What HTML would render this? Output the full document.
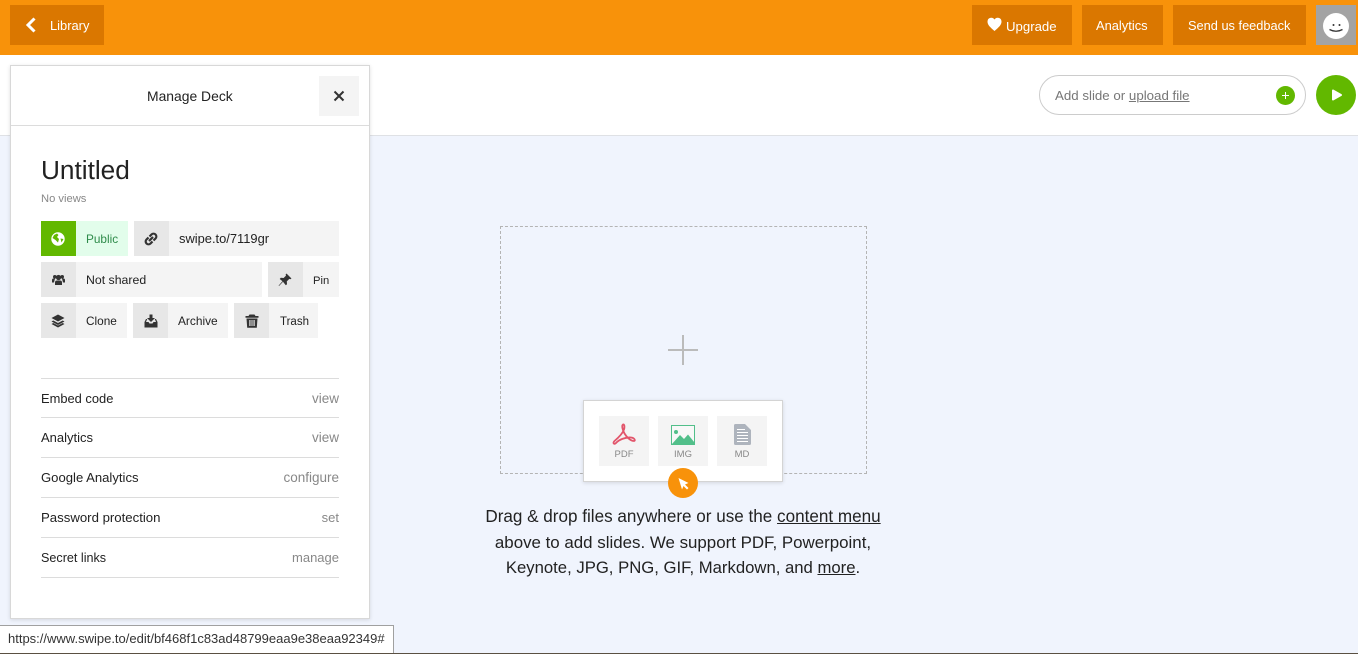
<!DOCTYPE html>
<html><head><meta charset="utf-8"><style>
html,body{margin:0;padding:0}
body{width:1358px;height:654px;position:relative;overflow:hidden;background:#f0f4fd;font-family:"Liberation Sans",sans-serif;font-size:13px;color:#222}
div,svg{position:absolute}
.t{white-space:nowrap;line-height:18px;height:18px}
.o{background:#da7700;top:5px;height:40px}
.w{color:#fff;font-size:12.9px}
.g{background:#f4f4f4;height:35px}
.i{background:#e7e7e7;height:35px;width:35px}
.l{left:41px;width:298px;height:1px;background:#dcdcdc}
.s{font-size:12px}
.c{background:#f4f4f4;width:50px;height:50px;top:416px}
.m{font-size:9.5px;color:#888;text-align:center;width:50px}
.d{left:440px;width:486px;text-align:center;font-size:16.9px;color:#222}
.d a{color:#222;text-decoration:underline}
.v{color:#888}
</style></head><body>
<div style="left:0;top:0;width:1358px;height:55px;background:#f8920a"></div>
<div class="o" style="left:10px;width:94px"></div>
<svg style="left:24px;top:16px" width="14" height="18" viewBox="0 0 14 18"><path d="M10.500 2.500L4 9l6.500 6.500" fill="none" stroke="#fff" stroke-width="3"/></svg>
<div class="t w" style="left:50px;top:17px">Library</div>
<div class="o" style="left:972px;width:100px"></div>
<svg style="left:987px;top:17px" width="15" height="14" viewBox="0 0 15 14"><path d="M7.500 14C3 10 .5 8 .5 4.500A3.800 3.800 0 0 1 7.500 2.500A3.800 3.800 0 0 1 14.500 4.500C14.500 8 12 10 7.500 14z" fill="#fff"/></svg>
<div class="t w" style="left:1006px;top:18px;font-size:13.200px">Upgrade</div>
<div class="o" style="left:1082px;width:81px"></div>
<div class="t w" style="left:1096px;top:17px;font-size:12.900px">Analytics</div>
<div class="o" style="left:1173px;width:133px"></div>
<div class="t w" style="left:1188px;top:17px;font-size:12.800px">Send us feedback</div>
<div style="left:1316px;top:5px;width:40px;height:40px;background:#a3a3a3"></div>
<svg style="left:1316px;top:5px" width="40" height="40" viewBox="0 0 40 40"><circle cx="20" cy="21" r="13" fill="#fff"/><circle cx="17.500" cy="20" r="1" fill="#333"/><circle cx="23.500" cy="20" r="1" fill="#333"/><path d="M13.500 24.500q6.500 3.500 13 0" fill="none" stroke="#333" stroke-width="1.300"/></svg>

<div style="left:0;top:55px;width:1358px;height:80px;background:#fff;border-bottom:1px solid #dfe1e5"></div>
<div style="left:1039px;top:75px;width:265px;height:38px;border:1px solid #ccc;border-radius:20px;background:#fff"></div>
<div class="t" style="left:1055px;top:87px;color:#777;font-size:13.300px">Add slide or <u>upload file</u></div>
<svg style="left:1276px;top:86px" width="19" height="19" viewBox="0 0 19 19"><circle cx="9.500" cy="9.500" r="9.500" fill="#62b800"/><path d="M9.500 6v7M6 9.500h7" stroke="#fff" stroke-width="1"/></svg>
<svg style="left:1316px;top:75px" width="40" height="40" viewBox="0 0 40 40"><circle cx="20" cy="20" r="20" fill="#62b800"/><path d="M17 15.500L25 20 17 24.500z" fill="#fff" stroke="#fff" stroke-width="2" stroke-linejoin="round"/></svg>

<div style="left:10px;top:65px;width:358px;height:552px;background:#fff;border:1px solid #d8d8d8;box-shadow:0 1px 4px rgba(0,0,0,.12)"></div>
<div class="t" style="left:147px;top:87px;font-size:13.900px">Manage Deck</div>
<div style="left:319px;top:76px;width:40px;height:40px;background:#f4f4f4"></div>
<svg style="left:333px;top:90px" width="12" height="12" viewBox="0 0 12 12"><path d="M1.500 1.500l9 9M10.500 1.500l-9 9" stroke="#333" stroke-width="2"/></svg>
<div style="left:11px;top:125px;width:358px;height:1px;background:#dcdcdc"></div>
<div style="left:41px;top:155px;font-size:26.200px;line-height:30px;color:#222;white-space:nowrap">Untitled</div>
<div class="t" style="left:41px;top:190px;font-size:11.200px;color:#888">No views</div>

<div class="g" style="left:76px;top:221px;width:52px;background:#e2fdeb"></div>
<div class="i" style="left:41px;top:221px;background:#62b800"></div>
<svg style="left:51px;top:232px" width="14" height="14" viewBox="0 0 14 14"><circle cx="7" cy="7" r="6.700" fill="#fff"/><path d="M3 3l3-1.500 1.500 1.500L6 5l2 2-1 3.500L4.500 8 1.500 6zM9.500 6.500l3 .5-2 3.500z" fill="#62b800"/></svg>
<div class="t s" style="left:86px;top:230px;color:#2e8b4a;font-size:11.800px">Public</div>
<div class="g" style="left:169px;top:221px;width:170px"></div>
<div class="i" style="left:134px;top:221px"></div>
<svg style="left:144px;top:232px" width="14" height="14" viewBox="0 0 14 14"><path d="M5 9l4-4M4.500 5.500L2.500 7.500a2.500 2.500 0 0 0 4 4L8.500 9.500M9.500 8.500l2-2a2.500 2.500 0 0 0-4-4L5.500 4.500" fill="none" stroke="#333" stroke-width="2.200"/></svg>
<div class="t s" style="left:179px;top:230px;font-size:12.900px">swipe.to/7119gr</div>

<div class="g" style="left:76px;top:262px;width:186px"></div>
<div class="i" style="left:41px;top:262px"></div>
<svg style="left:52px;top:274px" width="13" height="12" viewBox="0 0 13 12"><circle cx="6.500" cy="3.500" r="2.600" fill="#333"/><circle cx="2.800" cy="2.800" r="1.800" fill="#333"/><circle cx="10.200" cy="2.800" r="1.800" fill="#333"/><path d="M3 11V8.500a2 2 0 0 1 2-2h3a2 2 0 0 1 2 2V11zM0 8.500V6a1.500 1.500 0 0 1 1.500-1.500H3L2 8.500zM13 8.500V6a1.500 1.500 0 0 0-1.500-1.500H10l1 4z" fill="#333"/></svg>
<div class="t s" style="left:86px;top:271px;font-size:12.300px">Not shared</div>
<div class="g" style="left:303px;top:262px;width:36px"></div>
<div class="i" style="left:268px;top:262px"></div>
<svg style="left:278px;top:273px" width="14" height="14" viewBox="0 0 14 14"><path d="M8.500 .5l5 5-1.200.8-1-.4-2.500 2.500.2 2.800-1.200 1.100L5 8.800 1 13 .6 12.600 4.500 8.300 1.700 6l1.100-1.200 2.800.2L8 2.600l-.4-1z" fill="#333"/></svg>
<div class="t s" style="left:313px;top:272px;font-size:11.200px">Pin</div>

<div class="g" style="left:76px;top:303px;width:51px"></div>
<div class="i" style="left:41px;top:303px"></div>
<svg style="left:51px;top:314px" width="14" height="14" viewBox="0 0 14 14"><path d="M7 .5l6.500 3.500L7 7.500.5 4z" fill="#333"/><path d="M2.300 6.500L.5 7.500 7 11l6.500-3.500-1.800-1L7 9zM2.300 9L.5 10 7 13.500 13.500 10l-1.800-1L7 11.500z" fill="#333"/></svg>
<div class="t s" style="left:86px;top:312px;font-size:11.800px">Clone</div>
<div class="g" style="left:168px;top:303px;width:60px"></div>
<div class="i" style="left:133px;top:303px"></div>
<svg style="left:144px;top:314px" width="14" height="14" viewBox="0 0 14 14"><path d="M5.500 .5h3v3.500h2.500L7 8 3 4h2.500z" fill="#333"/><path d="M.5 8l1.500-3h1.200L2 8h2.500l1 1.500h3L9.500 8H12l-1.200-3H12l1.500 3v5.500H.5z" fill="#333"/></svg>
<div class="t s" style="left:178px;top:312px;font-size:11.900px">Archive</div>
<div class="g" style="left:269px;top:303px;width:49px"></div>
<div class="i" style="left:234px;top:303px"></div>
<svg style="left:245px;top:314px" width="14" height="14" viewBox="0 0 14 14"><path d="M4.500 .5h5l1 1.500h3v1.800H.5V2h3zM1.500 4.500h11l-.7 9.200H2.200zM4.300 6v6h1.200V6zM6.500 6v6h1V6zM8.500 6v6h1.200V6z" fill="#333" fill-rule="evenodd"/></svg>
<div class="t s" style="left:280px;top:313px;font-size:11.500px">Trash</div>

<div class="l" style="top:378px"></div>
<div class="t" style="left:41px;top:390px;font-size:12.900px">Embed code</div><div class="t v" style="right:1019px;top:390px;font-size:13.500px">view</div>
<div class="l" style="top:417px"></div>
<div class="t" style="left:41px;top:429px">Analytics</div><div class="t v" style="right:1019px;top:429px;font-size:13.500px">view</div>
<div class="l" style="top:457px"></div>
<div class="t" style="left:41px;top:469px;font-size:13.100px">Google Analytics</div><div class="t v" style="right:1019px;top:469px;font-size:13.500px">configure</div>
<div class="l" style="top:497px"></div>
<div class="t" style="left:41px;top:509px;font-size:13.200px">Password protection</div><div class="t v" style="right:1019px;top:509px;">set</div>
<div class="l" style="top:537px"></div>
<div class="t" style="left:41px;top:549px;font-size:12.600px">Secret links</div><div class="t v" style="right:1019px;top:549px">manage</div>
<div class="l" style="top:577px"></div>

<div style="left:500px;top:226px;width:365px;height:246px;border:1px dashed #b4b4b4"></div>
<svg style="left:668px;top:335px" width="30" height="30" viewBox="0 0 30 30"><path d="M15 0v30M0 15h30" stroke="#bbb" stroke-width="2"/></svg>
<div style="left:583px;top:400px;width:198px;height:80px;background:#fff;border:1px solid #d4d4d4;box-shadow:0 1px 4px rgba(0,0,0,.12)"></div>
<div class="c" style="left:599px"></div>
<svg style="left:612px;top:423px" width="24" height="23" viewBox="0 0 24 23"><path d="M11 1.500C9.500 2.500 10.500 7 12.500 10.500 14.500 14 18.500 18 22 18c1.500 0 1-3-3-3.500C14 14 7 16.500 4 20c-2 2-3.500 0-1.500-2C6 15 10.500 11 12 6.500 13 3 12 .8 11 1.500z" fill="none" stroke="#e2556b" stroke-width="1.800"/></svg>
<div class="t m" style="left:599px;top:446px">PDF</div>
<div class="c" style="left:658px"></div>
<svg style="left:671px;top:425px" width="24" height="20" viewBox="0 0 24 20"><rect x=".5" y=".5" width="23" height="19" fill="#f8f8f8" stroke="#52bf8a"/><circle cx="5" cy="7" r="2" fill="#52bf8a"/><path d="M1 19l8-9 4 4 4-4.500 6.500 8V19z" fill="#52bf8a"/></svg>
<div class="t m" style="left:658px;top:446px">IMG</div>
<div class="c" style="left:717px"></div>
<svg style="left:734px;top:424px" width="17" height="21" viewBox="0 0 17 21"><path d="M0 1.500A1.500 1.500 0 0 1 1.500 0H11l6 6v13.500a1.500 1.500 0 0 1-1.500 1.500h-14A1.500 1.500 0 0 1 0 19.500z" fill="#aeb4bd"/><path d="M3 5.500h8M3 8.500h11M3 11.500h11M3 14.500h11M3 17.500h11" stroke="#fff" stroke-width=".9"/></svg>
<div class="t m" style="left:717px;top:446px">MD</div>
<svg style="left:668px;top:468px" width="30" height="30" viewBox="0 0 30 30"><circle cx="15" cy="15" r="15" fill="#f8920a"/><path d="M10.500 10l10 5-3.500 1.500 3.500 3.500-1.500 1.500-3.500-3.500-1.500 3.500z" fill="#fff"/></svg>

<div class="t d" style="top:508px;font-size:17.100px">Drag &amp; drop files anywhere or use the <a>content menu</a></div>
<div class="t d" style="top:534px">above to add slides. We support PDF, Powerpoint,</div>
<div class="t d" style="top:559px;font-size:16.700px">Keynote, JPG, PNG, GIF, Markdown, and <a>more</a>.</div>

<div style="left:0;top:653px;width:1358px;height:1px;background:#5a5042"></div>
<div style="left:0;top:625px;width:393px;height:27px;background:#fff;border-top:1px solid #a0a0a0;border-right:1px solid #a0a0a0"></div>
<div class="t" style="left:8px;top:630px;font-size:13px;color:#333">https://www.swipe.to/edit/bf468f1c83ad48799eaa9e38eaa92349#</div>
</body></html>
